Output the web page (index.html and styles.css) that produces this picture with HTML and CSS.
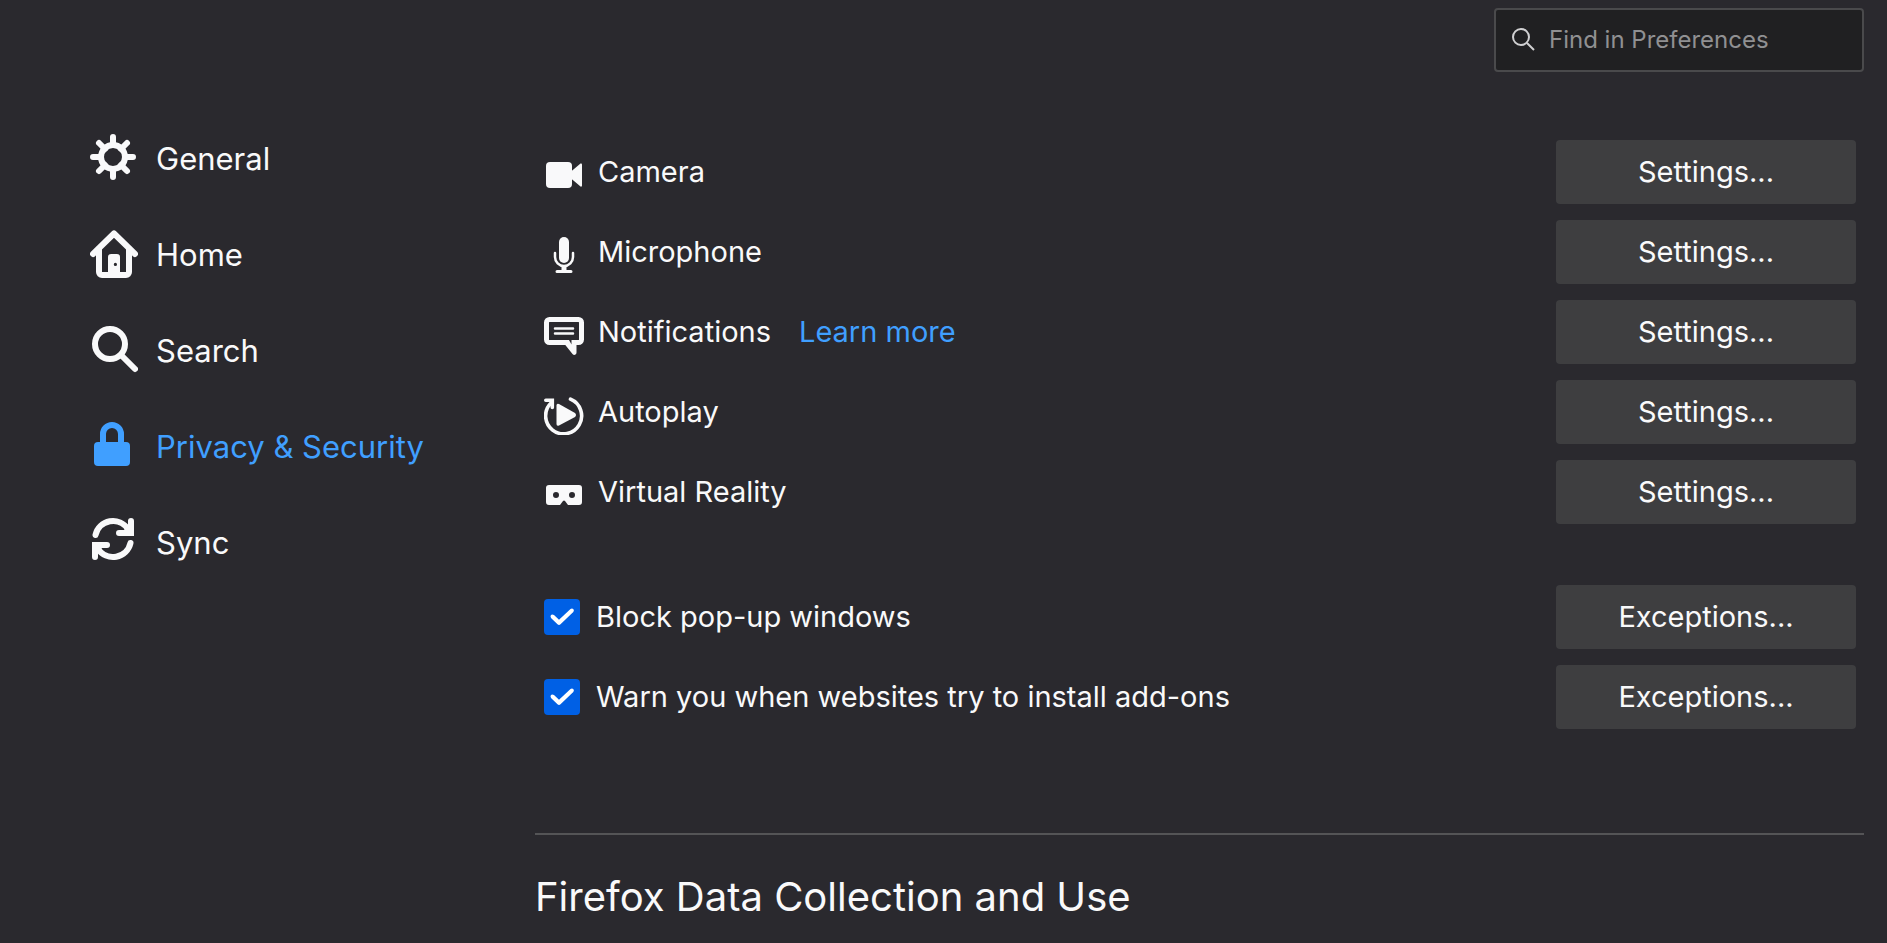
FILE: index.html
```html
<!DOCTYPE html>
<html lang="en">
<head>
    <meta charset="UTF-8">
    <title>Preferences</title>
    <link rel="stylesheet" href="styles.css">
</head>
<body>
<header class="top">
    <div class="search">
        <svg class="search-icon" viewBox="0 0 24 24" aria-hidden="true">
            <circle cx="10" cy="9" r="8"/>
            <path d="M16 15l7 7"/>
        </svg>
        <input type="text" class="search-input" placeholder="Find in Preferences" aria-label="Find in Preferences">
    </div>
</header>
<div class="page">
    <nav class="sidebar">
        <a href="#general" class="nav-item">
            <svg class="nav-icon" viewBox="0 0 48 48" aria-hidden="true">
                <circle class="line" cx="23" cy="23" r="12"/>
                <path class="line" d="M23 3v8M23 35v8M3 23h8M35 23h8M9 9l6 6M31 31l6 6M37 9l-6 6M15 31l-6 6"/>
            </svg>
            <span>General</span>
        </a>
        <a href="#home" class="nav-item">
            <svg class="nav-icon" viewBox="0 0 48 48" aria-hidden="true">
                <path class="line" d="M3 24L24 3.500L45 24"/>
                <path class="line" d="M9 19v23a3 3 0 0 0 3 3h24a3 3 0 0 0 3-3V19"/>
                <path fill-rule="evenodd" d="M18 46V27a3 3 0 0 1 3-3h6a3 3 0 0 1 3 3v19zM25.400 32.800a1.600 1.600 0 1 0 0 3.200a1.600 1.600 0 1 0 0-3.200z"/>
            </svg>
            <span>Home</span>
        </a>
        <a href="#search" class="nav-item">
            <svg class="nav-icon" viewBox="0 0 48 48" aria-hidden="true">
                <circle class="line" cx="20" cy="18" r="15"/>
                <path class="line" d="M31 29l14 14"/>
            </svg>
            <span>Search</span>
        </a>
        <a href="#privacy" class="nav-item active">
            <svg class="nav-icon" viewBox="0 0 48 48" aria-hidden="true">
                <rect x="4" y="20" width="36" height="24" rx="4"/>
                <path class="line" d="M13 23V12a9 9 0 0 1 18 0v11"/>
            </svg>
            <span>Privacy &amp; Security</span>
        </a>
        <a href="#sync" class="nav-item">
            <svg class="nav-icon" viewBox="0 0 48 48" aria-hidden="true">
                <path class="line" d="M5.500 17A18 18 0 0 1 38 11"/>
                <path class="line" d="M40.500 25A18 18 0 0 1 8 31"/>
                <path class="line" d="M41 3v12H29"/>
                <path class="line" d="M5 39V27h12"/>
                <path d="M44 14v4h-4zM2 28v-4h4zM34 10l7 0v6h-5zM12 32l-7 0v-6h5z"/>
            </svg>
            <span>Sync</span>
        </a>
    </nav>
    <main class="content">
        <section class="group">
            <div class="row">
                <svg class="row-icon" viewBox="0 0 40 40" aria-hidden="true">
                    <rect x="2" y="7" width="26" height="26" rx="4"/>
                    <path d="M27 16.500L36.500 8.500Q38 8 38 9.500V30.500Q38 32 36.500 31.500L27 23.500z"/>
                </svg>
                <span>Camera</span>
                <button type="button" class="btn">Settings...</button>
            </div>
            <div class="row">
                <svg class="row-icon" viewBox="0 0 40 40" aria-hidden="true">
                    <rect x="15" y="2" width="10" height="26" rx="5"/>
                    <path class="thin" d="M11 18v4a9 9 0 0 0 18 0v-4"/>
                    <path d="M17.500 31h5v4h4.500a1.500 1.500 0 0 1 0 3h-14a1.500 1.500 0 0 1 0-3h4.500z"/>
                </svg>
                <span>Microphone</span>
                <button type="button" class="btn">Settings...</button>
            </div>
            <div class="row">
                <svg class="row-icon" viewBox="0 0 40 40" aria-hidden="true">
                    <rect class="frame" x="2.500" y="4.500" width="35" height="23" rx="3"/>
                    <path class="thin" d="M11 13.500h18M11 18.500h18"/>
                    <path d="M20.500 29L28.500 39Q30 40.500 31.500 39.500Q32.500 39 32.500 37.500V29z"/>
                    <path class="notch" d="M25 25h2.500v4.500z"/>
                </svg>
                <span>Notifications</span>
                <a href="#notifications" class="learn">Learn more</a>
                <button type="button" class="btn">Settings...</button>
            </div>
            <div class="row">
                <svg class="row-icon" viewBox="0 0 40 40" aria-hidden="true">
                    <path class="ring" d="M26.500 4.200A18 18 0 1 1 7 8"/>
                    <path class="ring" d="M1.800 5.300H8.300V12.500"/>
                    <path d="M12.500 10.500Q12.500 8 15 9L31 18Q33 20 31 22L15 30.500Q12.500 31.500 12.500 29z"/>
                </svg>
                <span>Autoplay</span>
                <button type="button" class="btn">Settings...</button>
            </div>
            <div class="row">
                <svg class="row-icon" viewBox="0 0 40 40" aria-hidden="true">
                    <path fill-rule="evenodd" d="M5 10H35a3 3 0 0 1 3 3V27a3 3 0 0 1-3 3H24L21 26Q20 25 19 26L16 30H5a3 3 0 0 1-3-3V13a3 3 0 0 1 3-3zM12 17a3 3 0 1 0 0 6a3 3 0 1 0 0-6zM28 17a3 3 0 1 0 0 6a3 3 0 1 0 0-6z"/>
                </svg>
                <span>Virtual Reality</span>
                <button type="button" class="btn">Settings...</button>
            </div>
        </section>
        <section class="group checks">
            <div class="row">
                <input type="checkbox" class="check" id="popups" checked>
                <label for="popups">Block pop-up windows</label>
                <button type="button" class="btn">Exceptions...</button>
            </div>
            <div class="row">
                <input type="checkbox" class="check" id="addons" checked>
                <label for="addons">Warn you when websites try to install add-ons</label>
                <button type="button" class="btn">Exceptions...</button>
            </div>
        </section>
        <h2 class="heading">Firefox Data Collection and Use</h2>
    </main>
</div>
</body>
</html>
```

FILE: styles.css
```css
*{ box-sizing: border-box; margin: 0; padding: 0;}
body{
    background-color: #2a292e;
    color: #f9f9fa;
    font-family: Inter, "Liberation Sans", sans-serif;
    font-size: 29px;
    line-height: 40px;
}
a{
    color: inherit;
    text-decoration: none;
}
svg{
    flex: none;
    fill: currentColor;
}
.top{
    display: flex;
    justify-content: flex-end;
    padding: 8px 23px 0;
}
.search{
    display: flex;
    align-items: center;
    gap: 14px;
    width: 370px;
    height: 64px;
    padding: 0 15px;
    border: 2px solid #4a4a4c;
    border-radius: 4px;
    background-color: #202022;
}
.search-icon{
    width: 24px;
    height: 24px;
    fill: none;
    stroke: #d0d0d2;
    stroke-width: 2;
}
.search-input{
    flex: 1;
    min-width: 0;
    border: 0;
    outline: 0;
    background: none;
    color: #f9f9fa;
    font: inherit;
    font-size: 24px;
}
.search-input::placeholder{
    color: #909092;
    opacity: 1;
}
.page{
    display: flex;
    padding: 38px 23px 0 90px;
}
.sidebar{
    width: 445px;
    flex: none;
}
.nav-item{
    display: flex;
    align-items: center;
    gap: 18px;
    height: 96px;
    font-size: 31px;
}
.nav-item span{
    padding-top: 2px;
}
.nav-item.active{
    color: #409fff;
}
.nav-icon{
    width: 48px;
    height: 48px;
}
.line{
    fill: none;
    stroke: currentColor;
    stroke-width: 6;
    stroke-linecap: round;
    stroke-linejoin: round;
}
.content{
    flex: 1;
    min-width: 0;
    padding-top: 30px;
}
.group{
    display: flex;
    flex-direction: column;
    gap: 16px;
    padding: 0 8px 0 9px;
}
.row{
    display: flex;
    align-items: center;
    height: 64px;
}
.row-icon{
    width: 40px;
    height: 40px;
    margin: 6px 14px 0 0;
}
.thin, .frame, .ring{
    fill: none;
    stroke: currentColor;
    stroke-width: 2.5;
    stroke-linecap: round;
}
.frame{
    stroke-width: 5;
}
.ring{
    stroke-width: 3.6;
}
.notch{
    fill: #2a292e;
}
.learn{
    margin-left: 28px;
    color: #409fff;
}
.btn{
    width: 300px;
    height: 64px;
    margin-left: auto;
    border: 0;
    border-radius: 4px;
    background-color: #3e3e40;
    color: #f9f9fa;
    font: inherit;
}
.checks{
    margin-top: 61px;
}
.check{
    appearance: none;
    display: grid;
    place-items: center;
    width: 36px;
    height: 36px;
    margin-right: 16px;
    border-radius: 4px;
}
.check:checked{
    background-color: #0060e5;
}
.check:checked::before{
    content: "";
    width: 24px;
    height: 18px;
    background-color: #fff;
    clip-path: path("M1 10Q0 8 1 7Q2 6 4 7L9 11.8L20.500 1Q22 0 23.300 1Q24.500 2.500 23.300 4L10.500 16.300Q9 17.500 7.500 16.300Z");
}
.heading{
    margin-top: 104px;
    padding-top: 32px;
    border-top: 2px solid #545456;
    font-size: 40px;
    font-weight: 400;
    line-height: 60px;
}
```
